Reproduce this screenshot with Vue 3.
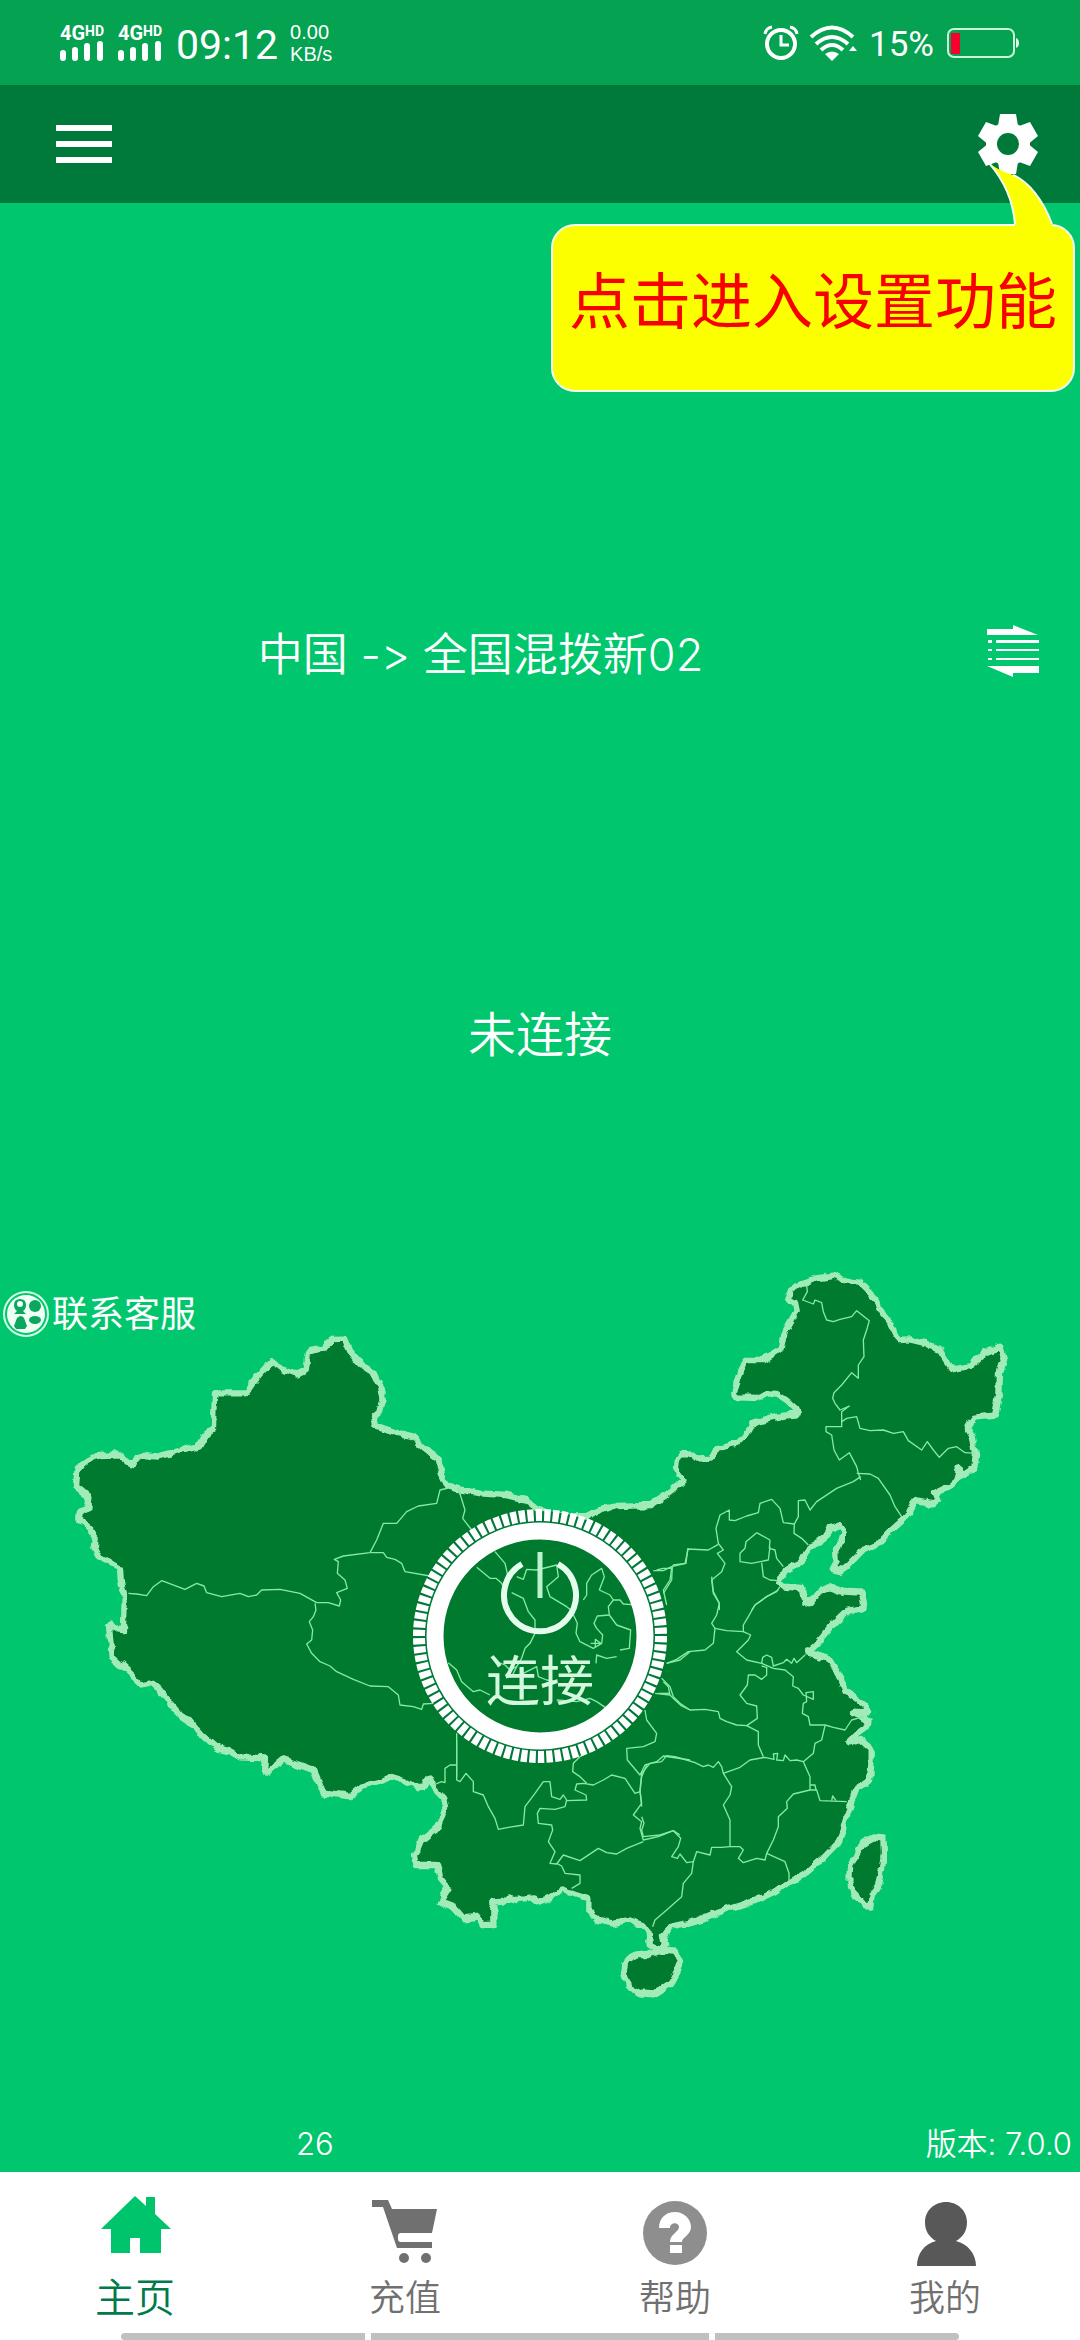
<script setup>
  import { ref } from 'vue'

  const node = ref('中国 -> 全国混拨新02')
  const connected = ref(false)
  const activeTab = ref('home')
  const tabs = ref([
    { id: 'home', title: '主页' },
    { id: 'recharge', title: '充值' },
    { id: 'help', title: '帮助' },
    { id: 'mine', title: '我的' }
  ])

  // 省界线，按区域分组
  const borders = [
    {
      id: 'west',
      move: 'translate(0 540)',
      lines: [
        '385,490 410,492 440,497 460,470 485,452 555,478 590,460 612,468 620,488 665,500 720,490 745,500 770,495 785,480 840,478 900,490 950,518 985,518 1018,528 1022,510 1010,488 1042,475 1035,450 1012,430 1015,395 1003,388 1030,378 1110,368 1130,330 1150,280 1190,280 1220,245 1255,228 1310,220 1320,180 1345,174',
        '945,520 948,540 940,560 928,575 938,600 935,630 920,642 935,670 960,695 990,708 1010,725 1060,748 1110,768 1165,770 1195,795 1200,825 1240,830 1265,838 1270,822 1300,820',
        '1112,368 1150,368 1160,382 1185,388 1205,400 1215,425 1290,438'
      ]
    },
    {
      id: 'center',
      move: 'translate(1170 690)',
      lines: [
        '205,25 225,90 218,115 245,150 265,165',
        '315,215 345,250 352,280 348,300',
        '260,262 300,295 318,295 335,310 350,345',
        '365,338 400,355 415,395 435,420 435,460 420,490 405,505 395,535 380,560 360,570 345,555 320,545',
        '175,548 200,570 215,605 250,635 270,630 300,645',
        '380,290 400,298 410,268 440,270 500,255 505,290 470,320 480,350 530,380 555,400',
        '580,360 590,345 590,310 605,285 635,265 643,290 628,330 660,345 670,360 690,360 700,372 725,374',
        '670,360 655,380 658,405 680,435 722,450 718,505 690,510',
        '658,405 622,408 612,430 620,445 638,465 635,490 610,505 570,485 558,460 562,430 548,400',
        '602,490 632,490 616,478 616,500',
        '618,550 620,525 650,535 680,530',
        '380,560 365,590 400,580 440,560 445,590 470,600 500,605',
        '500,660 560,665 600,655 620,665 650,685',
        '800,270 820,265 845,265 850,255 885,250 895,205',
        '845,265 840,300 820,330 830,375',
        '830,550 870,540 900,515',
        '815,595 840,620 850,650 870,670 900,690',
        '795,640 840,645',
        '765,690 770,720 800,760 795,785 760,800 710,805 712,840 750,885 765,855 800,845 820,828 900,840',
        '200,760 200,890'
      ]
    },
    {
      id: 'northeast',
      move: 'translate(1920 0)',
      lines: [
        '500,105 502,125 488,150 520,162 525,150 545,158 550,185 560,210 580,215 600,208 635,200 650,182 688,212 680,240 670,270 672,320 655,345 655,385 635,368 605,405 582,428 578,445 585,460 600,480 628,468 605,485 605,530 558,530 558,545 575,555 582,600 598,630 628,608 650,650 655,670 662,690',
        '605,515 620,505 650,500 660,535 690,542 730,540 760,550 790,545 805,572 845,600 862,575 880,600 898,622 925,595 950,590 975,608 1005,610',
        '662,680 640,695 590,715 530,755 510,780 495,750 475,752 475,800 463,822 462,850 485,865 505,885',
        '650,670 690,672 715,685 750,735 765,770 785,800',
        '463,822 430,818 420,775 395,748 360,760 355,788 320,798 285,812 268,810 268,780 240,795 228,835 235,880 250,900 232,910 255,940 245,965 215,990 220,1030 238,1060 238,1080',
        '350,848 390,870 388,895 405,900 410,925 430,950',
        '350,848 318,875 315,895 300,910 300,935 335,940 385,930 390,890',
        '365,938 370,980 390,990 415,992',
        '235,883 205,900 143,897 138,940 95,950 70,962 40,962',
        '97,950 95,990 70,1030',
        '420,1010 410,1025 380,1040 345,1065 335,1080'
      ]
    },
    {
      id: 'east',
      move: 'translate(1920 930)',
      lines: [
        '215,50 220,95 238,130 230,165 215,190 225,205 220,250 195,270 145,275 110,298 80,310',
        '225,205 260,212 310,215 310,195 325,170 345,135 380,110 415,90',
        '310,215 332,225 325,240 290,275 320,300 365,310 368,292 380,285 395,292 400,318 430,308 440,298 455,310 462,295 470,308 495,285',
        '365,310 400,325 435,330 460,350 458,378 475,385 490,405 520,418 520,395 498,398 500,425 490,430 487,460 505,470 510,495 555,495 580,502 615,510 635,480 670,470',
        '365,318 380,322 380,345 365,358 345,345 325,345 322,375 300,405 320,430 350,438 352,475 320,497 290,495 260,485 240,475 235,455 195,448 150,450 125,438 105,420 90,405 85,380 70,365',
        '320,497 355,515 355,555 370,590',
        '55,400 90,400',
        '555,497 545,540 525,550 520,580 490,605 470,600 450,602 435,585 430,602 410,600 413,580 400,582 402,598 375,592 330,600 300,622 250,640 245,620 235,605 220,622 205,615 190,620 165,608 140,600 105,590 80,587 65,605 30,610 5,640 0,690 5,740',
        '490,605 510,650 510,690 530,690 540,722 620,725',
        '575,722 578,708 588,722',
        '510,675 525,675 528,690',
        '510,690 460,702 440,725 442,745 415,770 415,800 400,840 380,880 375,900 350,895 310,908 295,895 310,870 300,860 270,860 245,862 215,862 210,885 170,875 160,905 155,940 130,970 125,1010 80,1050 45,1080 38,1100',
        '380,880 435,905 447,940 447,965',
        '250,640 275,680 270,705 250,735 270,780 270,860',
        '5,770 12,790 5,810 10,830 60,825 100,812 122,835 115,860 95,890 112,895 120,882 140,908 160,905'
      ]
    },
    {
      id: 'south',
      move: 'translate(1140 1470)',
      lines: [
        '160,135 185,125 195,128 195,85 210,75 228,75',
        '230,0 230,120 240,125 258,100 280,125 280,155 310,165 325,200 345,235 355,268 385,262 430,255 435,200 465,160 490,125 510,125 515,170 540,178 550,165 560,180 555,200 525,208 480,205 472,220 475,250 515,255 518,270 505,305 525,335 510,370 530,372 550,345 600,362 655,325 680,338 710,342 740,325 790,305',
        '530,370 545,378 555,400 600,405 600,430 575,445',
        '560,182 620,180 618,165 585,150 590,132 610,130 640,135 670,120 695,105 735,115 765,160 780,155 785,110 800,75',
        '620,130 600,110 578,95 580,70 600,50 620,40',
        '780,155 785,190 760,225 785,245 780,265 790,300 835,290 880,272 900,285'
      ]
    }
  ]

  function toggleConnect() {
    connected.value = !connected.value
  }

  function selectTab(tab) {
    activeTab.value = tab.id
  }
</script>

<template>
  <div class="page">
    <div class="status-bar">
      <div class="sim" v-for="n in 2" :key="n">
        <span class="sim-type">4G<small>HD</small></span>
        <svg class="bars" viewBox="0 0 44 20" aria-hidden="true">
          <path d="M3 12v5M15 9v8M27 5v12M40 3v14" stroke="#fff" stroke-width="6" stroke-linecap="round" />
        </svg>
      </div>
      <span class="clock">09:12</span>
      <div class="speed">
        <div>0.00</div>
        <div>KB/s</div>
      </div>
      <span class="spacer"></span>
      <svg class="alarm" viewBox="0 0 36 36" aria-hidden="true">
        <circle cx="18" cy="19" r="14" fill="none" stroke="#fff" stroke-width="4" />
        <path d="M18 10v10h8" fill="none" stroke="#fff" stroke-width="3" />
        <path d="M2 9Q3 3 9 2M27 2Q33 3 34 9" fill="none" stroke="#fff" stroke-width="3" />
      </svg>
      <svg class="wifi" viewBox="0 0 48 36" aria-hidden="true">
        <path d="M2 12Q23 -7 44 12M7 19Q23 5 39 19M12 25Q23 15 34 25" fill="none" stroke="#fff" stroke-width="4" />
        <path d="M16 29Q23 24 30 29L23 36ZM40 26l4-5 4 5Z" fill="#fff" />
      </svg>
      <span class="percent">15%</span>
      <svg class="battery" viewBox="0 0 74 32" aria-hidden="true">
        <rect x="2" y="2" width="66" height="28" rx="6" fill="none" stroke="#c9f7dc" stroke-width="2" />
        <rect x="5" y="6" width="9" height="21" fill="#f8002e" />
        <path d="M70 11q3 1 3 5t-3 5Z" fill="#dffbe9" />
      </svg>
    </div>

    <header class="header">
      <button type="button" class="icon-btn" aria-label="菜单">
        <svg class="menu-icon" viewBox="0 0 56 38">
          <path d="M0 0h56v6H0zM0 16h56v6H0zM0 32h56v6H0z" fill="#fff" />
        </svg>
      </button>
      <button type="button" class="icon-btn" aria-label="设置">
        <svg class="gear-icon" viewBox="0 0 60 60">
          <g fill="#fff">
            <circle cx="30" cy="30" r="22" />
            <path v-for="n in 6" :key="n" d="M22 0h16l2 12H20Z" :transform="`rotate(${n * 60} 30 30)`" />
          </g>
          <circle cx="30" cy="30" r="11" fill="#007a3b" />
        </svg>
      </button>
      <div class="tip">
        <svg class="tip-tail" viewBox="0 0 70 68" aria-hidden="true">
          <path d="M4 3C18 19 28 40 30 64V68H67V64C58 40 44 22 28 15C18 12 10 8 4 3Z" fill="#fbff00" />
          <path d="M4 3C18 19 28 40 30 64M67 64C58 40 44 22 28 15" fill="none" stroke="#f3fff0" stroke-width="2" />
        </svg>
        点击进入设置功能
      </div>
    </header>

    <main class="content">
      <div class="node-row">
        <span class="node-name">{{ node }}</span>
        <button type="button" class="icon-btn" aria-label="选择线路">
          <svg class="list-icon" viewBox="0 0 52 52" fill="#fff">
            <path d="M0 4h26V0l25 10H0zM52 48H26v4L0 41h52zM9 15h43v3H9zM9 24h43v2H9zM9 33h43v2H9zM1 15h4v3H1zM1 24h4v2H1zM1 33h4v2H1z" />
          </svg>
        </button>
      </div>

      <p class="state">{{ connected ? '已连接' : '未连接' }}</p>

      <section class="stage">
        <svg class="map" viewBox="0 0 3240 2280" aria-hidden="true">
          <!-- 让海岸线和国界更粗糙 -->
          <filter id="rough" x="0" y="0" width="100%" height="100%" filterUnits="userSpaceOnUse">
            <feTurbulence type="fractalNoise" baseFrequency="0.03" numOctaves="2" seed="4" />
            <feDisplacementMap in="SourceGraphic" scale="22" xChannelSelector="R" yChannelSelector="G" />
          </filter>
          <g class="land" filter="url(#rough)">
            <path
              d="M228 710L232 660L246 642L262 630L300 615L365 613L378 635L402 642L412 622L428 614L470 620L540 602L597 590L614 560L642 535L643 490L645 430L738 430L772 380L812 337L850 358L893 370L917 358L924 305L975 295L997 267L1032 266L1047 302L1080 342L1120 368L1140 410L1148 447L1138 487L1122 500L1128 527L1190 548L1235 558L1270 590L1310 622L1325 670L1342 707L1380 718L1440 730L1520 735L1580 750L1610 775L1680 800L1760 798L1800 780L1850 768L1950 765L1995 735L2050 690L2028 655L2030 632L2047 612L2077 614L2092 626L2132 623L2160 592L2210 580L2240 552L2255 525L2300 508L2350 497L2390 494L2386 475L2360 452L2330 432L2305 430L2280 444L2210 442L2200 430L2220 370L2236 330L2290 330L2345 295L2355 245L2390 182L2385 158L2365 148L2375 123L2410 98L2450 85L2500 77L2540 92L2580 95L2615 130L2650 195L2670 220L2695 270L2730 268L2780 280L2820 300L2835 325L2855 358L2910 348L2955 308L3000 290L3012 330L3000 365L2998 430L2985 497L2920 503L2900 530L2918 560L2928 615L2923 655L2885 678L2878 655L2868 690L2845 710L2805 730L2813 752L2800 763L2745 753L2720 800L2670 845L2640 878L2590 898L2545 945L2520 963L2498 958L2510 935L2508 895L2525 870L2532 845L2520 827L2490 835L2460 878L2425 892L2400 940L2355 962L2337 998L2350 1010L2405 1014L2412 1052L2430 1060L2460 1022L2490 1012L2530 1025L2585 1028L2592 1060L2590 1075L2540 1082L2500 1120L2450 1180L2420 1207L2485 1225L2520 1280L2540 1325L2570 1345L2597 1365L2598 1390L2565 1388L2602 1412L2595 1437L2570 1455L2545 1480L2585 1470L2615 1495L2615 1530L2610 1590L2570 1615L2555 1655L2538 1705L2525 1750L2512 1782L2470 1825L2420 1867L2365 1900L2320 1930L2240 1960L2160 1985L2080 2015L2010 2030L1992 2060L1998 2085L1975 2096L1950 2085L1945 2045L1930 2025L1885 2010L1840 2020L1795 2010L1765 1980L1765 1945L1720 1930L1685 1918L1655 1940L1615 1957L1600 1945L1575 1948L1550 1950L1525 1942L1510 1955L1480 1957L1480 2025L1450 2025L1435 2000L1390 2005L1360 1970L1320 1955L1345 1915L1320 1885L1308 1845L1250 1845L1245 1815L1265 1770L1315 1730L1335 1670L1325 1635L1305 1615L1288 1580L1275 1608L1250 1612L1215 1590L1175 1578L1140 1595L1085 1610L1050 1638L970 1628L955 1595L940 1560L885 1540L850 1528L820 1550L805 1568L792 1562L795 1525L720 1522L690 1504L650 1495L605 1455L565 1410L535 1390L475 1315L460 1302L430 1308L380 1260L335 1220L327 1130L333 1118L350 1138L372 1140L374 1040L362 990L360 955L295 915L282 890L285 850L235 805L236 785L265 775L268 740L238 715Z" />
            <path d="M2620 1762L2650 1765L2652 1810L2645 1860L2635 1900L2615 1940L2610 1970L2595 1968L2560 1930L2548 1900L2550 1850L2570 1810L2590 1778Z" />
            <path d="M1945 2115L1980 2102L2025 2105L2043 2130L2030 2165L2010 2200L1960 2233L1920 2230L1885 2210L1872 2170L1880 2130L1910 2115Z" />
          </g>
          <g class="borders" v-for="area in borders" :key="area.id" :transform="area.move">
            <polyline v-for="line in area.lines" :key="line" :points="line" />
          </g>
        </svg>

        <a href="#service" class="service">
          <svg class="service-icon" viewBox="0 0 48 48" aria-hidden="true">
            <circle cx="24" cy="24" r="22" fill="none" stroke="#d4fbe4" stroke-width="2" />
            <circle cx="24" cy="24" r="19" fill="#f0fff6" />
            <g fill="#0aa85c">
              <path d="M12 15q0-6 6-6t6 6q0 4-3 6l3 3H12l3-3q-3-2-3-6Z" />
              <circle cx="33" cy="16" r="6" />
              <path d="M15 28q4-4 7 0l3 8-2 3h-9l-2-3Z" />
              <ellipse cx="33" cy="30" rx="6" ry="4" />
            </g>
            <circle cx="18" cy="14" r="3" fill="#f0fff6" />
          </svg>
          <span>联系客服</span>
        </a>

        <button type="button" class="connect" @click="toggleConnect">
          <svg class="dial" viewBox="0 0 256 256" aria-hidden="true">
            <circle cx="128" cy="128" r="119" fill="none" stroke="#007a3b" stroke-width="12" />
            <circle cx="128" cy="128" r="121" fill="none" stroke="#fff" stroke-width="12" pathLength="360" stroke-dasharray="3 1" />
            <circle cx="128" cy="128" r="105" fill="none" stroke="#fff" stroke-width="17" />
            <path d="M110 56A36 36 0 1 0 146 56" fill="none" stroke="#e4fdec" stroke-width="6" />
            <path d="M128 44v46" stroke="#bff3cf" stroke-width="5" />
          </svg>
          <span class="connect-label">连接</span>
        </button>
      </section>

      <div class="info">
        <span>26</span>
        <span>版本: 7.0.0</span>
      </div>
    </main>

    <nav class="tab-bar">
      <button
        v-for="tab in tabs"
        :key="tab.id"
        type="button"
        class="tab"
        :class="{ active: activeTab === tab.id }"
        @click="selectTab(tab)"
      >
        <svg class="tab-icon" viewBox="0 0 72 72" aria-hidden="true">
          <path v-if="tab.id === 'home'" fill="#00c46c" d="M36 2L47 12V3h9v17l16 15H62v24H41V44H31v15H12V35H2Z" />
          <g v-else-if="tab.id === 'recharge'" fill="#707070">
            <path d="M3 6h16l4 9h45l-5 24H32q-3 0-3 3v3q0 3 3 3h31v6H28L14 13H3Z" />
            <circle cx="35" cy="64" r="5" />
            <circle cx="57" cy="64" r="5" />
          </g>
          <g v-else-if="tab.id === 'help'">
            <circle cx="36" cy="39" r="32" fill="#8e8e8e" />
            <path fill="#fff" d="M20 34C20 24 27 18 36 18C45 18 52 25 52 33C52 41 43 43 43 48H31C31 40 40 38 40 33C40 28 31 28 31 34ZM31 51h12v8H31Z" />
          </g>
          <path v-else fill="#585858" d="M37 8C49 8 58 17 58 28C58 37 54 43 47 47C59 50 67 60 67 72H8C8 60 15 50 27 47C20 43 16 37 16 28C16 17 25 8 37 8Z" />
        </svg>
        <span>{{ tab.title }}</span>
      </button>
      <div class="gesture">
        <span></span>
        <span></span>
        <span></span>
      </div>
    </nav>
  </div>
</template>

<style>
  body {
    background-color: #00c76d;
  }
</style>

<style scoped>
  .page {
    display: flex;
    flex-direction: column;
    min-height: 100vh;
    background-color: #00c76d;
    color: #fff;
    font-family: Inter, "Noto Sans CJK SC", sans-serif;
    font-weight: 350;
    font-variant-ligatures: none;
  }

  button {
    margin: 0;
    padding: 0;
    border: none;
    background: none;
    color: inherit;
    font: inherit;
    cursor: pointer;
  }

  svg {
    display: block;
  }

  .status-bar {
    display: flex;
    align-items: center;
    height: 85px;
    padding: 0 60px;
    background-color: #04a251;
    font-family: Roboto, sans-serif;
    font-weight: 400;
  }

  .sim {
    width: 44px;
    margin-right: 14px;
  }

  .sim-type {
    display: flex;
    font-size: 20px;
    font-weight: 700;
    line-height: 16px;
  }

  .sim-type small {
    font-size: 14px;
    line-height: 12px;
  }

  .bars {
    width: 44px;
    height: 20px;
  }

  .clock {
    margin: 4px 12px 0 0;
    font-size: 41px;
  }

  .speed {
    font-family: "Liberation Sans", sans-serif;
    font-size: 20px;
    line-height: 22px;
  }

  .spacer {
    flex: 1;
  }

  .alarm {
    width: 36px;
    height: 36px;
    margin-right: 10px;
  }

  .wifi {
    width: 48px;
    height: 36px;
    margin-right: 12px;
  }

  .percent {
    margin: 4px 12px 0 0;
    font-size: 35px;
  }

  .battery {
    width: 74px;
    height: 32px;
  }

  .header {
    position: relative;
    z-index: 1;
    display: flex;
    align-items: center;
    justify-content: space-between;
    height: 118px;
    padding: 0 42px 0 56px;
    background-color: #007a3b;
  }

  .menu-icon {
    width: 56px;
    height: 38px;
  }

  .gear-icon {
    width: 60px;
    height: 60px;
  }

  .tip {
    position: absolute;
    top: 139px;
    right: 5px;
    box-sizing: border-box;
    padding: 32px 16px 44px;
    border: 2px solid #f3fff0;
    border-radius: 24px;
    background-color: #fbff00;
    color: #f80000;
    font-size: 61px;
    font-weight: 400;
    line-height: 88px;
    white-space: nowrap;
  }

  .tip-tail {
    position: absolute;
    top: -66px;
    right: 18px;
    width: 70px;
    height: 68px;
  }

  .content {
    flex: 1;
    display: flex;
    flex-direction: column;
  }

  .node-row {
    display: flex;
    align-items: center;
    padding: 412px 41px 0 0;
  }

  .node-name {
    flex: 1;
    padding: 8px 26px 0 0;
    font-size: 45px;
    line-height: 64px;
    text-align: center;
  }

  .list-icon {
    width: 52px;
    height: 52px;
  }

  .state {
    margin: 316px 0 183px;
    font-size: 48px;
    line-height: 64px;
    text-align: center;
  }

  .stage {
    position: relative;
  }

  .map {
    width: 100%;
    height: auto;
  }

  .land {
    fill: #007a2e;
    stroke: #a0ebb8;
    stroke-width: 19;
    stroke-linejoin: round;
  }

  .borders {
    fill: none;
    stroke: #86eaa2;
    stroke-width: 4;
    stroke-linejoin: round;
  }

  .service {
    position: absolute;
    top: 40px;
    left: 2px;
    display: flex;
    align-items: center;
    gap: 2px;
    color: #fff;
    font-size: 36px;
    font-weight: 400;
    line-height: 48px;
    text-decoration: none;
  }

  .service-icon {
    width: 48px;
    height: 48px;
  }

  .connect {
    position: absolute;
    top: 258px;
    left: 50%;
    display: grid;
    justify-items: center;
    transform: translateX(-50%);
  }

  .dial,
  .connect-label {
    grid-area: 1 / 1;
  }

  .dial {
    width: 256px;
    height: 256px;
  }

  .connect-label {
    padding-top: 142px;
    color: #d3f8de;
    font-size: 54px;
    font-weight: 400;
    line-height: 64px;
  }

  .info {
    display: flex;
    justify-content: space-between;
    margin-top: auto;
    padding: 0 8px 8px 296px;
    font-size: 31px;
    line-height: 40px;
  }

  .tab-bar {
    position: relative;
    display: grid;
    grid-template-columns: repeat(4, 1fr);
    background-color: #fff;
  }

  .tab {
    display: flex;
    flex-direction: column;
    align-items: center;
    gap: 10px;
    padding: 22px 0 20px;
    color: #707070;
    font-size: 36px;
    line-height: 44px;
  }

  .tab.active {
    color: #007a4a;
    font-size: 40px;
  }

  .tab-icon {
    width: 72px;
    height: 72px;
  }

  .gesture {
    position: absolute;
    right: 121px;
    bottom: 0;
    left: 121px;
    display: grid;
    grid-template-columns: 244fr 338fr 244fr;
    gap: 6px;
    height: 7px;
  }

  .gesture span {
    background-color: #c0c0c0;
  }

  .gesture span:first-child {
    border-radius: 4px 0 0 4px;
  }

  .gesture span:last-child {
    border-radius: 0 4px 4px 0;
  }
</style>
